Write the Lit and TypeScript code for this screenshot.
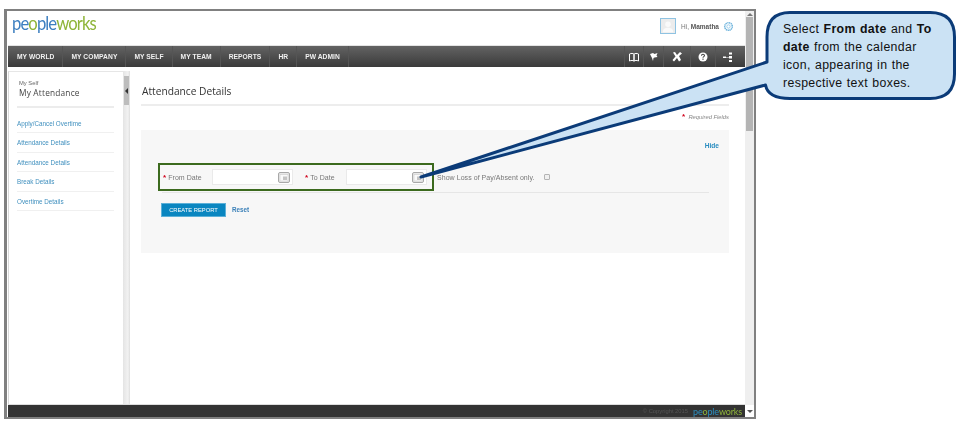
import { LitElement, html, css, svg } from "lit";
import { customElement } from "lit/decorators.js";

const calIcon = html`<svg class="cal" viewBox="0 0 12 11" width="12" height="11"><rect x=".5" y=".5" width="11" height="10" rx="1.500" fill="#e8e8e8" stroke="#a8a8a8"/><rect x="2" y="2.500" width="8" height="6.500" fill="#fafafa" stroke="#cccccc" stroke-width=".6"/><rect x="5" y="4.500" width="4" height="3.500" fill="#c4c4c4"/></svg>`;

const navIcons = [
  svg`<path d="M1.500 3c1.800-.8 3.500-.8 4.500.2v7c-1-1-2.700-1-4.500-.2zM10.500 3c-1.800-.8-3.500-.8-4.500.2v7c1-1 2.700-1 4.500-.2z" fill="none" stroke="#fff" stroke-width="1"/>`,
  svg`<path d="M2 3l3-1 1.500 1 3-1-1 2.500 1 1.500-3 .5-1 .5-.5 3-1-3-.5-1z" fill="#fff"/>`,
  svg`<path d="M2 1.500l2-.5 2 3 3-3 2 1.500-3 2.500 2 4-2 1.500-2-3.500-3 3.500-1.500-1.500 3-3.500z" fill="#fff"/>`,
  svg`<circle cx="6" cy="6" r="4.500" fill="#fff"/><path d="M4.500 4.800c0-2 3-2 3-.2 0 1.100-1.500 1-1.500 2.200" fill="none" stroke="#444" stroke-width="1.100"/><rect x="5.400" y="7.600" width="1.200" height="1.200" fill="#444"/>`,
  svg`<path d="M1 5.500h3v1.500h-3zM4 6h3v.6h-3zM7 1.500h3v2h-3zM7 5h3v2.500h-3zM7 9h3v2h-3z" fill="#fff"/>`,
];

@customElement("app-root")
export class AppRoot extends LitElement {
  static styles = css`
    :host { display: block; width: 958px; height: 423px; position: relative; overflow: hidden; background: #fff; font-family: "Liberation Sans", Arial, sans-serif; }
    * { box-sizing: border-box; }
    .stage { padding: 9px 0 0 4px; }
    .frame { width: 752px; height: 410px; border: solid #808080; border-width: 2px 2px 2px 3px; display: flex; background: #fff; filter: blur(.35px); }
    .page { width: 738px; margin-left: 1px; display: flex; flex-direction: column; }
    .scroll { width: 9px; background: #efefef; display: flex; flex-direction: column; align-items: center; }
    .thumb { width: 7px; height: 114px; background: #b4b4b4; margin-top: 1px; }
    .arrow-up { width: 0; height: 0; border: 3px solid transparent; border-top: 0; border-bottom: 3px solid #777; margin-top: 2px; }
    .arrow-dn { width: 0; height: 0; border: 3px solid transparent; border-bottom: 0; border-top: 3px solid #555; }
    .sb-fill { background: #fff; width: 9px; height: 12px; margin-top: auto; display: flex; align-items: center; justify-content: center; }

    header { height: 35px; display: flex; align-items: center; padding: 0 11px 0 4px; border-bottom: 1px solid #e4e4e4; flex: none; }
    .logo { font-family: "Lato", sans-serif; font-weight: 400; font-size: 18.500px; letter-spacing: -1px; color: #3d7fc0; line-height: 1; margin-top: -10px; transform: scaleX(.9); transform-origin: left center; }
    .logo .g { color: #8fb53a; }
    .user { margin-left: auto; display: flex; align-items: center; margin-top: -4px; }
    .avatar { width: 16px; height: 16px; border: 1px solid #8fc3e2; background: #ececec; margin-right: 5px; display: block; }
    .hi { font-size: 6.500px; color: #777; margin-right: 4px; }
    .hi b { color: #555; }

    nav { height: 21px; flex: none; background: linear-gradient(#636363, #3a3a3a); display: flex; align-items: stretch; color: #f0f0f0; font-size: 6.700px; font-weight: bold; letter-spacing: .05px; }
    .tab { display: flex; align-items: center; padding: 0 8px; border-right: 1px solid #555; white-space: nowrap; }
    .tab:first-child { padding-left: 9px; }
    .tools { margin-left: auto; display: flex; padding-right: 5px; }
    .tool { display: flex; align-items: center; justify-content: center; width: 25px; border-left: 1px solid #555; }
    .tool:nth-child(1) { width: 19px; }
    .tool:nth-child(2) { width: 20px; }
    .tool:nth-child(3) { width: 27px; }

    .body { flex: 1; display: flex; min-height: 0; margin-top: 4px; }
    aside { width: 115px; flex: none; border-left: 1px solid #d8d8d8; border-top: 1px solid #e6e6e6; padding: 8px 9px 0 8px; }
    .crumb { font-size: 5.800px; color: #666; padding-left: 2px; line-height: 6px; }
    .sec { font-family: "Open Sans", sans-serif; font-size: 8.300px; letter-spacing: .2px; color: #444; padding-left: 2px; line-height: 12px; margin-top: 1px; padding-bottom: 7px; border-bottom: 2px solid #ececec; margin-bottom: 6px; }
    .sb-link { display: block; font-size: 6.300px; color: #3f8fbe; height: 19.400px; line-height: 19px; border-bottom: 1px solid #f0f0f0; white-space: nowrap; }
    .split { width: 7px; flex: none; background: linear-gradient(90deg, #e4e4e4, #f2f2f2 70%, #dedede); display: flex; flex-direction: column; }
    .handle { margin-top: 5px; height: 29px; width: 5px; margin-left: 1px; background: #bdbdbd; display: flex; align-items: center; justify-content: center; }
    .handle i { width: 0; height: 0; border: 3px solid transparent; border-left: 0; border-right: 3px solid #333; }
    main { flex: 1; padding: 0 16px 0 11px; min-width: 0; }
    h1 { margin: 0; font-family: "Open Sans", sans-serif; font-weight: 400; font-size: 10.200px; color: #333; height: 35px; padding-top: 13px; line-height: 14px; border-bottom: 2px solid #ededed; padding-left: 1px; }
    .req { text-align: right; font-size: 5.800px; font-style: italic; color: #888; height: 24px; line-height: 22px; }
    .req b { color: #d0021b; font-style: normal; font-weight: bold; font-size: 8px; }
    .panel { height: 123px; background: #f7f7f7; padding: 11px 10px 0 17px; }
    .hide { text-align: right; font-size: 6.600px; font-weight: bold; color: #2a8dc0; height: 9px; line-height: 9px; }
    .row { display: flex; align-items: center; margin-top: 13px; font-size: 7px; letter-spacing: .05px; color: #777; }
    .box { width: 276px; height: 28px; border: 2px solid #3c6a1e; display: flex; align-items: center; padding-left: 3px; }
    .dot { color: #d0021b; font-weight: bold; font-size: 8px; margin-right: 2px; }
    .lbl { white-space: nowrap; }
    .input { width: 81px; height: 16px; background: #fff; border: 1px solid #eaeaea; display: flex; align-items: center; justify-content: flex-end; padding-right: 2px; }
    .f1 { width: 49px; display: flex; align-items: center; }
    .f2 { width: 42px; display: flex; align-items: center; margin-left: 12px; }
    .f2 + .input { margin-left: -1px; }
    .show { margin-left: 3px; white-space: nowrap; }
    .chk { width: 6px; height: 6px; border: 1px solid #b4b4b4; border-radius: 1px; background: #f0f0f0; margin-left: 10px; }
    .rule { height: 1px; background: #e6e6e6; margin: 1px 10px 0 4px; }
    .acts { display: flex; align-items: center; margin-top: 10px; margin-left: 3px; }
    .btn { width: 65px; height: 14px; background: #0a86c0; color: #fff; font-size: 5.800px; display: flex; align-items: center; justify-content: center; border: 1px solid #5cb0d8; }
    .reset { margin-left: 6px; font-size: 6.300px; font-weight: bold; color: #3b80b8; margin-top: -2px; }

    footer { height: 13px; flex: none; background: #333; border-top: 1px solid #ddd; display: flex; align-items: center; justify-content: flex-end; padding-right: 3px; margin-top: auto; }
    .copy { font-size: 5.800px; color: #555; margin-right: 5px; }
    .flogo { font-family: "Lato", sans-serif; font-size: 9px; color: #2c8fc0; line-height: 1; letter-spacing: -.15px; }
    .flogo .g { color: #8fb53a; }

    .callout { position: absolute; left: 0; top: 0; width: 958px; height: 423px; pointer-events: none; }
    .callout-text { position: absolute; left: 783px; top: 20px; width: 170px; font-size: 12.300px; line-height: 18px; letter-spacing: .35px; word-spacing: .5px; color: #111; white-space: nowrap; }
  `;

  render() {
    const tabs = ["MY WORLD", "MY COMPANY", "MY SELF", "MY TEAM", "REPORTS", "HR", "PW ADMIN"];
    const links = ["Apply/Cancel Overtime", "Attendance Details", "Attendance Details", "Break Details", "Overtime Details"];
    return html`
      <div class="stage">
        <div class="frame">
          <div class="page">
            <header>
              <div class="logo">pe<span class="g">o</span>ple<span class="g">works</span></div>
              <div class="user">
                <svg class="avatar" viewBox="0 0 16 16"><circle cx="8" cy="6" r="3.200" fill="#fafafa"/><path d="M2 15c0-4 3-5 6-5s6 1 6 5z" fill="#fafafa"/></svg>
                <span class="hi">Hi, <b>Mamatha</b></span>
                <svg width="11" height="11" viewBox="0 0 11 11"><circle cx="5.500" cy="5.500" r="3.800" fill="none" stroke="#6db3dc" stroke-width="1.500" stroke-dasharray="1.300 .5"/><circle cx="5.500" cy="5.500" r="1.700" fill="none" stroke="#8cc4e6" stroke-width=".8"/></svg>
              </div>
            </header>
            <nav>
              ${tabs.map((t) => html`<div class="tab">${t}</div>`)}
              <div class="tools">
                ${navIcons.map((p) => html`<div class="tool"><svg width="12" height="12" viewBox="0 0 12 12">${p}</svg></div>`)}
              </div>
            </nav>
            <div class="body">
              <aside>
                <div class="crumb">My Self</div>
                <div class="sec">My Attendance</div>
                ${links.map((l) => html`<a class="sb-link">${l}</a>`)}
              </aside>
              <div class="split"><div class="handle"><i></i></div></div>
              <main>
                <h1>Attendance Details</h1>
                <div class="req"><b>*</b>&nbsp; Required Fields</div>
                <div class="panel">
                  <div class="hide">Hide</div>
                  <div class="row">
                    <div class="box">
                      <div class="f1"><span class="dot">*</span><span class="lbl">From Date</span></div>
                      <div class="input">${calIcon}</div>
                      <div class="f2"><span class="dot">*</span><span class="lbl">To Date</span></div>
                      <div class="input">${calIcon}</div>
                    </div>
                    <span class="show">Show Loss of Pay/Absent only.</span>
                    <span class="chk"></span>
                  </div>
                  <div class="rule"></div>
                  <div class="acts">
                    <div class="btn">CREATE REPORT</div>
                    <div class="reset">Reset</div>
                  </div>
                </div>
              </main>
            </div>
            <footer>
              <span class="copy">© Copyright 2015</span>
              <span class="flogo">pe<span class="g">o</span>ple<span class="g">works</span></span>
            </footer>
          </div>
          <div class="scroll">
            <div class="arrow-up"></div>
            <div class="thumb"></div>
            <div class="sb-fill"><div class="arrow-dn"></div></div>
          </div>
        </div>
      </div>
      <svg class="callout" viewBox="0 0 958 423">
        <path d="M790 12.500H930Q954.500 12.500 954.500 37V74Q954.500 98.500 930 98.500H790Q768 98.500 765.500 85L421 177L767 62V37Q767 12.500 790 12.500Z" fill="#cbe2f4" stroke="#0b3b78" stroke-width="3" stroke-linejoin="round"/>
      </svg>
      <div class="callout-text">Select <b>From date</b> and <b>To</b><br><b>date</b> from the calendar<br>icon, appearing in the<br>respective text boxes.</div>
    `;
  }
}
